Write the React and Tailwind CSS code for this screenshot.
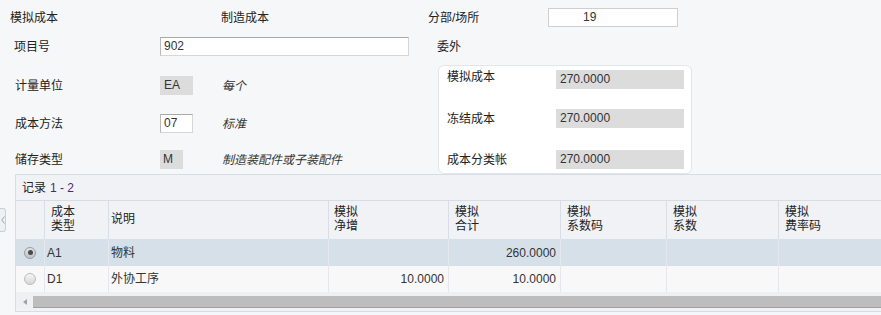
import React from "react";

const Radio = ({ checked }) => (
    <span
        className={
            checked
                ? "w-[12px] h-[12px] rounded-full border border-[#9c9c9c] bg-linear-to-b from-[#e4e4e4] to-[#c2c2c2] flex items-center justify-center"
                : "w-[12px] h-[12px] rounded-full border border-[#bcbcbc] bg-linear-to-b from-[#f6f6f6] to-[#d6d6d6]"
        }
    >
        {checked && <span className="w-[5px] h-[5px] rounded-full bg-[#4a4a4a]" />}
    </span>
);

// column widths include the right border
const cols = [
    { w: "w-[29px]", pad: "" },
    { w: "w-[64px]", pad: "pl-[6px]" },
    { w: "w-[220px]", pad: "pl-[2px]" },
    { w: "w-[120px]", pad: "pl-[5px]" },
    { w: "w-[112px]", pad: "pl-[6px]" },
    { w: "w-[106px]", pad: "pl-[6px]" },
    { w: "w-[112px]", pad: "pl-[6px]" },
    { w: "w-[140px]", pad: "pl-[6px]" },
];

const headers = [
    null,
    ["成本", "类型"],
    ["说明"],
    ["模拟", "净增"],
    ["模拟", "合计"],
    ["模拟", "系数码"],
    ["模拟", "系数"],
    ["模拟", "费率码"],
];

const rows = [
    { sel: true, type: "A1", desc: "物料", net: "", total: "260.0000" },
    { sel: false, type: "D1", desc: "外协工序", net: "10.0000", total: "10.0000" },
];

export default function App() {
    return (
        <div className="relative w-[881px] h-[315px] overflow-hidden bg-[#f6f7f9] text-[12px] text-[#222] font-['Liberation_Sans','Noto_Sans_CJK_SC',sans-serif]">
            {/* Top line */}
            <div className="flex items-center h-[19px] mt-[8px]">
                <span className="ml-[10px] w-[211px]">模拟成本</span>
                <span className="w-[207px]">制造成本</span>
                <span className="w-[120px]">分部/场所</span>
                <div className="w-[130px] h-[19px] bg-white border border-[#cfcfcf] pl-[34px] leading-[17px] text-[#333]">19</div>
            </div>

            <div className="flex mt-[10px] h-[137px]">
                {/* Left column */}
                <div className="w-[430px] flex flex-col">
                    <div className="flex items-center h-[19px]">
                        <span className="ml-[14px] w-[146px]">项目号</span>
                        <div className="w-[249px] h-[19px] bg-white border border-[#d6d6d6] border-t-[#a9a9a9] border-l-[#b9b9b9] pl-[3px] leading-[17px] text-[#333]">902</div>
                    </div>
                    <div className="flex items-center h-[19px] mt-[20px]">
                        <span className="ml-[15px] w-[145px]">计量单位</span>
                        <div className="w-[33px] h-[19px] bg-[#dcdcdc] pl-[4px] leading-[19px] text-[#333]">EA</div>
                        <span className="ml-[29px] italic text-[#333]">每个</span>
                    </div>
                    <div className="flex items-center h-[19px] mt-[19px]">
                        <span className="ml-[15px] w-[145px]">成本方法</span>
                        <div className="w-[33px] h-[19px] bg-white border border-[#d6d6d6] border-t-[#a9a9a9] border-l-[#b9b9b9] pl-[3px] leading-[17px] text-[#333]">07</div>
                        <span className="ml-[29px] italic text-[#333]">标准</span>
                    </div>
                    <div className="flex items-center h-[19px] mt-[17px]">
                        <span className="ml-[15px] w-[145px]">储存类型</span>
                        <div className="w-[23px] h-[19px] bg-[#dcdcdc] pl-[3px] leading-[19px] text-[#333]">M</div>
                        <span className="ml-[39px] italic text-[#333]">制造装配件或子装配件</span>
                    </div>
                </div>

                {/* Right column */}
                <div className="flex flex-col">
                    <div className="h-[19px] flex items-center pl-[7px]">委外</div>
                    <div className="mt-[9px] ml-[8px] w-[254px] h-[109px] rounded-[6px] border border-[#e2e5e9] bg-white pt-[4px]">
                        <div className="flex items-center h-[19px]">
                            <span className="pl-[8px] w-[117px] -mt-[6px]">模拟成本</span>
                            <div className="w-[128px] h-[19px] bg-[#dcdcdc] pl-[4px] leading-[19px] text-[#333]">270.0000</div>
                        </div>
                        <div className="flex items-center h-[19px] mt-[20px]">
                            <span className="pl-[8px] w-[117px]">冻结成本</span>
                            <div className="w-[128px] h-[19px] bg-[#dcdcdc] pl-[4px] leading-[19px] text-[#333]">270.0000</div>
                        </div>
                        <div className="flex items-center h-[19px] mt-[22px]">
                            <span className="pl-[8px] w-[117px]">成本分类帐</span>
                            <div className="w-[128px] h-[19px] bg-[#dcdcdc] pl-[4px] leading-[19px] text-[#333]">270.0000</div>
                        </div>
                    </div>
                </div>
            </div>

            {/* Grid */}
            <div className="ml-[15px] h-[138px] border-l border-t border-b border-[#d5dde5] bg-[#f0f2f6] flex flex-col">
                <div className="h-[25px] flex items-center pl-[6px]">
                    <span>记录</span>
                    <span className="ml-[4px] text-[#4b2b6b]">1 - 2</span>
                </div>
                <div className="flex h-[39px] border-t border-[#d5dde5] min-w-max">
                    {cols.map((c, i) => (
                        <div key={i} className={`${c.w} ${c.pad} shrink-0 border-r border-[#d8dee5] flex flex-col justify-center pb-[2px] leading-[14px]`}>
                            {headers[i] && headers[i].map((t) => <span key={t}>{t}</span>)}
                        </div>
                    ))}
                </div>
                {rows.map((r) => (
                    <div
                        key={r.type}
                        className={`flex min-w-max text-[#333] ${r.sel ? "h-[27px] bg-[#d6e0e8]" : "h-[26px] bg-[#f8f8f8]"}`}
                    >
                        <div className={`${cols[0].w} shrink-0 border-r border-[#e4e8ec] flex items-center justify-center`}>
                            <Radio checked={r.sel} />
                        </div>
                        <div className={`${cols[1].w} shrink-0 border-r border-[#e4e8ec] flex items-center pl-[2px]`}>{r.type}</div>
                        <div className={`${cols[2].w} shrink-0 border-r border-[#e4e8ec] flex items-center pl-[2px]`}>{r.desc}</div>
                        <div className={`${cols[3].w} shrink-0 border-r border-[#e4e8ec] flex items-center justify-end pr-[4px]`}>{r.net}</div>
                        <div className={`${cols[4].w} shrink-0 border-r border-[#e4e8ec] flex items-center justify-end pr-[4px]`}>{r.total}</div>
                        <div className={`${cols[5].w} shrink-0 border-r border-[#e4e8ec]`} />
                        <div className={`${cols[6].w} shrink-0 border-r border-[#e4e8ec]`} />
                        <div className={`${cols[7].w} shrink-0 border-r border-[#e4e8ec]`} />
                    </div>
                ))}
                {/* Horizontal scrollbar */}
                <div className="h-[16px] flex items-end bg-[#eef0f3]">
                    <div className="w-[17px] h-[12px] flex items-center justify-center">
                        <span className="w-0 h-0 border-y-[3px] border-y-transparent border-r-[4px] border-r-[#a0a0a0]" />
                    </div>
                    <div className="flex-1 h-[12px] bg-[#bdbdbd] border-b border-[#9f9f9f]" />
                </div>
            </div>

            {/* Collapse handle */}
            <div className="absolute left-0 top-[208px] w-[6px] h-[24px] rounded-r-[3px] border border-l-0 border-[#c8cfd7] bg-[#eef1f4] flex items-center justify-center">
                <svg width="4" height="8" viewBox="0 0 4 8" fill="none">
                    <path d="M3.5 0.5 L0.8 4 L3.5 7.5" stroke="#9aa3ad" strokeWidth="1" />
                </svg>
            </div>
        </div>
    );
}
